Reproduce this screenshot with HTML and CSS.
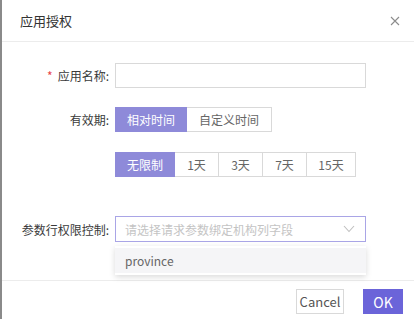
FILE: index.html
```html
<!DOCTYPE html>
<html lang="zh-CN">
<head>
<meta charset="UTF-8" />
<meta name="viewport" content="width=device-width, initial-scale=1.0"/>
<title>应用授权</title>
<link rel="stylesheet" href="styles.css">
</head>
<body>

  <div class="modal">
    <!-- Header -->
    <div class="modal-header">
      <span class="modal-title">应用授权</span>
      <span class="modal-close">
        <svg width="10" height="10" viewBox="0 0 10 10"><path d="M1 1 L9 9 M9 1 L1 9" stroke="#8c8c8c" stroke-width="1.1" fill="none"/></svg>
      </span>
    </div>

    <!-- Form -->
    <div class="modal-body">
      <div class="form-row row-name">
        <label class="form-label"><span class="req">*</span>应用名称:</label>
        <input class="text-input" type="text" />
      </div>

      <div class="form-row row-valid">
        <label class="form-label">有效期:</label>
        <div class="seg">
          <span class="seg-btn active w-rel">相对时间</span>
          <span class="seg-btn w-custom">自定义时间</span>
        </div>
      </div>

      <div class="form-row row-days">
        <span class="form-label"></span>
        <div class="seg">
          <span class="seg-btn active w-none">无限制</span>
          <span class="seg-btn w-day">1天</span>
          <span class="seg-btn w-day">3天</span>
          <span class="seg-btn w-day">7天</span>
          <span class="seg-btn w-day15">15天</span>
        </div>
      </div>

      <div class="form-row row-param">
        <label class="form-label">参数行权限控制:</label>
        <div class="select-wrap">
          <div class="select">
            <span class="placeholder">请选择请求参数绑定机构列字段</span>
            <svg class="arrow" width="12" height="8" viewBox="0 0 12 8"><path d="M1 1 L6 6.5 L11 1" stroke="#bfbfbf" stroke-width="1.1" fill="none"/></svg>
          </div>
          <div class="dropdown">
            <div class="option">province</div>
          </div>
        </div>
      </div>
    </div>

    <!-- Footer -->
    <div class="modal-footer">
      <button class="btn">Cancel</button>
      <button class="btn btn-primary">OK</button>
    </div>
  </div>

</body>
</html>
```

FILE: styles.css
```css
:root {
  --purple: #8e8ad9;
  --primary: #6b64d9;
  --border: #d9d9d9;
  --text: #444444;
}

body {
  margin: 0;
  background: #ffffff;
  font-family: "Noto Sans CJK SC", "Noto Sans", sans-serif;
  font-size: 12px;
  color: var(--text);
  border-left: 2px solid #8a8a8a;
  height: 319px;
  box-sizing: border-box;
  overflow: hidden;
}

.modal {
  display: flex;
  flex-direction: column;
}

.modal-header {
  height: 41px;
  border-bottom: 1px solid #ececec;
  display: flex;
  align-items: center;
  justify-content: space-between;
  padding: 0 14px 0 18px;
}

.modal-title {
  font-size: 13px;
  color: #333333;
}

.modal-close {
  display: flex;
  align-items: center;
}

.modal-body {
  padding: 21px 0 0 14px;
  height: 217px;
}

.form-row {
  display: flex;
  align-items: center;
}

.row-valid { margin-top: 19px; }
.row-days { margin-top: 20px; }
.row-param { margin-top: 39px; }

.form-label {
  width: 93px;
  padding-right: 6px;
  text-align: right;
  color: #3a3a3a;
  white-space: nowrap;
}

.req {
  color: #e8444a;
  margin-right: 5px;
}

.text-input {
  width: 251px;
  height: 25px;
  box-sizing: border-box;
  border: 1px solid var(--border);
  margin: 0;
  outline: none;
}

.seg {
  display: flex;
}

.seg-btn {
  height: 25px;
  box-sizing: border-box;
  border: 1px solid var(--border);
  border-left: none;
  display: flex;
  align-items: center;
  justify-content: center;
  color: #666666;
}

.seg-btn:first-child {
  border-left: 1px solid var(--border);
}

.seg-btn.active {
  background: var(--purple);
  border-color: var(--purple);
  color: #ffffff;
}

.w-rel { width: 72px; }
.w-custom { width: 85px; }
.w-none { width: 60px; }
.w-day { width: 44px; }
.w-day15 { width: 49px; }

.select-wrap {
  position: relative;
}

.select {
  width: 251px;
  height: 26px;
  box-sizing: border-box;
  border: 1px solid #a9a5e6;
  display: flex;
  align-items: center;
  justify-content: space-between;
  padding: 0 10px 0 9px;
}

.placeholder {
  color: #c4c4c4;
}

.dropdown {
  position: absolute;
  top: 30px;
  left: 0;
  width: 251px;
  background: #ffffff;
  box-shadow: 0 2px 6px rgba(0, 0, 0, 0.15);
  padding: 2px 0;
}

.option {
  height: 25px;
  line-height: 25px;
  padding-left: 10px;
  background: #f5f5f7;
  color: #666666;
}

.modal-footer {
  border-top: 1px solid #ececec;
  display: flex;
  justify-content: flex-end;
  gap: 19px;
  padding: 8px 11px 0 0;
}

.btn {
  height: 25px;
  font-family: "Noto Sans CJK SC", "Noto Sans", sans-serif;
  font-size: 13px;
  background: #ffffff;
  border: 1px solid var(--border);
  color: #555555;
  padding: 0;
  width: 48px;
}

.btn-primary {
  background: var(--primary);
  border-color: var(--primary);
  color: #ffffff;
  width: 40px;
  font-size: 14px;
}
```
